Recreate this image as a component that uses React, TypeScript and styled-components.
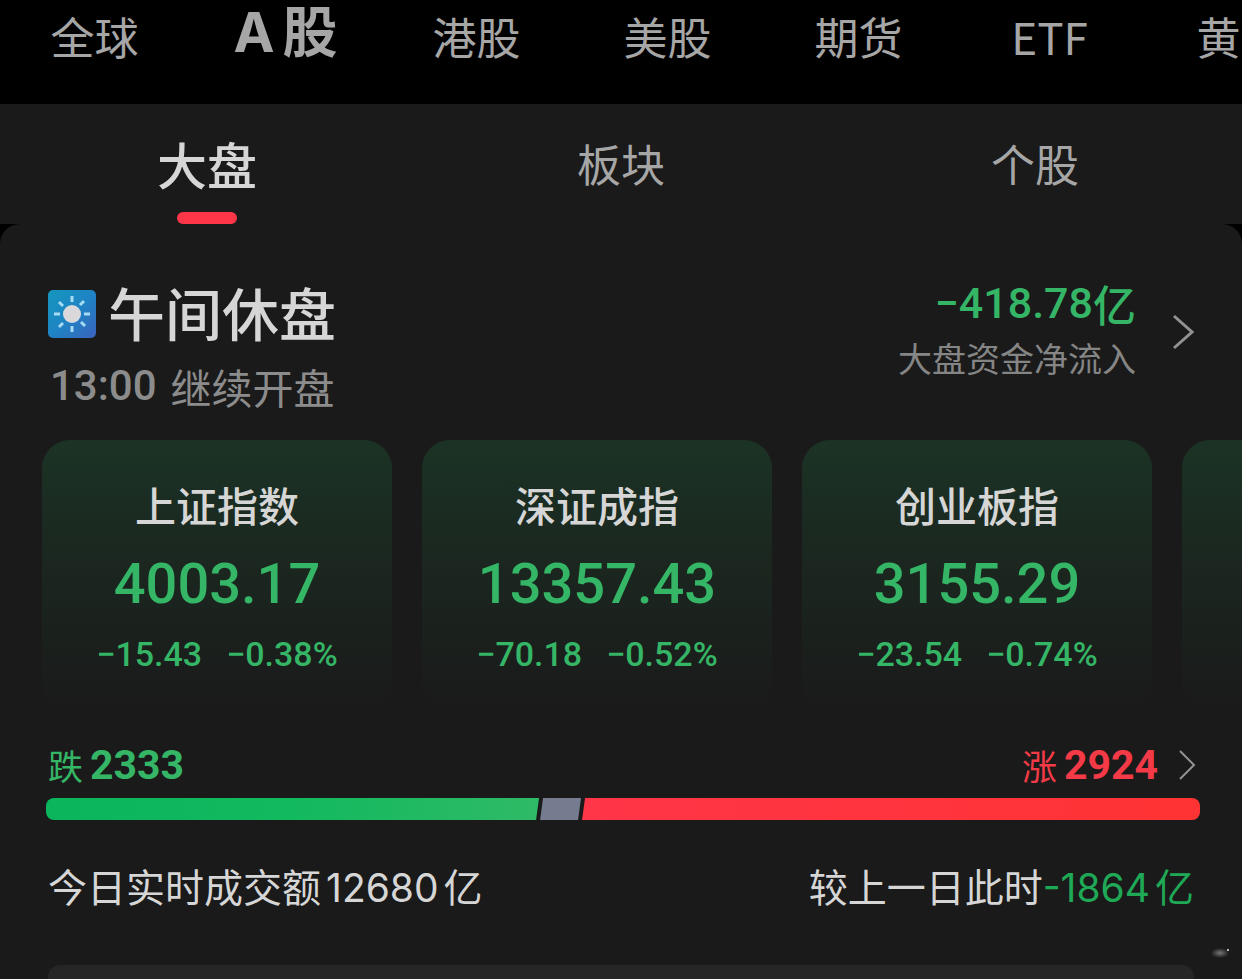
import React from 'react';
import styled, { createGlobalStyle, css } from 'styled-components';

const cjk = '"Noto Sans CJK SC", sans-serif';
const numeric = 'Roboto, "Noto Sans CJK SC", sans-serif';
const green = '#35b566';
const red = '#f43a47';

const GlobalStyle = createGlobalStyle`
  * { box-sizing: border-box; }
  html, body { margin: 0; background: #000; }
  body { font-family: ${cjk}; color: #d6d6d6; overflow-x: hidden; }
  button { margin: 0; padding: 0; border: 0; background: none; color: inherit; font: inherit; cursor: pointer; }
  h1, h2, p { margin: 0; font-weight: 400; }
`;

const Page = styled.div`
  display: flex;
  flex-direction: column;
  min-height: 100vh;
  overflow: hidden;
`;

const MarketNav = styled.nav`
  display: flex;
  height: 104px;
  margin-left: -1px;
  background: #000;
`;

const MarketButton = styled.button<{ $active?: boolean }>`
  && {
    flex: 0 0 191px;
    height: 72px;
    color: #a6a6a6;
    font-size: 44px;
    line-height: 72px;
    white-space: nowrap;
    ${(p) => p.$active && css`
      height: 56px;
      line-height: 56px;
      font-size: 55px;
      font-weight: 700;
    `}
  }
`;

const LatinLead = styled.span`
  margin-right: 8px;
  font-family: Inter, ${cjk};
`;

const ViewTabs = styled.div`
  display: grid;
  grid-template-columns: repeat(3, 1fr);
  height: 120px;
  background: #1a1a1a;
`;

const ViewTab = styled.button<{ $active?: boolean }>`
  && {
    display: flex;
    flex-direction: column;
    align-items: center;
    justify-content: space-between;
    color: ${(p) => (p.$active ? '#d6d6d6' : '#a6a6a6')};
    font-size: ${(p) => (p.$active ? 50 : 44)}px;
    font-weight: ${(p) => (p.$active ? 500 : 400)};
    line-height: 118px;
  }
`;

const TabLabel = styled.span`
  height: 108px;
`;

const TabMarker = styled.span`
  width: 60px;
  height: 12px;
  border-radius: 6px;
  background: #ff3648;
`;

const Panel = styled.main`
  position: relative;
  display: flex;
  flex: 1;
  flex-direction: column;
  border-radius: 20px 20px 0 0;
  background: #1a1a1a;
`;

const Summary = styled.section`
  display: flex;
  align-items: flex-start;
  justify-content: space-between;
  height: 216px;
  padding: 52px 48px 0;
`;

const TitleRow = styled.div`
  display: flex;
  align-items: center;
  gap: 12px;
  height: 76px;
`;

const Title = styled.h1`
  && {
    padding-bottom: 6px;
    font-size: 57px;
    font-weight: 500;
    line-height: 70px;
  }
`;

const Reopen = styled.p`
  display: flex;
  gap: 14px;
  padding-left: 2px;
  color: #8c8c8c;
  font-size: 41px;
  line-height: 68px;
`;

const ReopenTime = styled.time`
  font-family: ${numeric};
  font-size: 42px;
  font-weight: 500;
`;

const FlowButton = styled.button`
  && {
    display: flex;
    align-items: center;
    gap: 36px;
    text-align: right;
  }
`;

const FlowText = styled.div`
  padding-bottom: 2px;
`;

const FlowAmount = styled.p`
  && {
    display: flex;
    align-items: center;
    justify-content: flex-end;
    color: ${green};
    font-size: 43px;
    font-weight: 500;
    line-height: 54px;
  }
`;

const FlowNumber = styled.span`
  font-family: ${numeric};
`;

const FlowLabel = styled.p`
  color: #858585;
  font-size: 34px;
  line-height: 56px;
`;

const IndexList = styled.section`
  display: flex;
  gap: 30px;
  padding-left: 42px;
  overflow: hidden;
`;

const IndexCard = styled.article`
  flex: 0 0 350px;
  height: 270px;
  padding-top: 34px;
  border-radius: 28px;
  background: linear-gradient(#1b3325, #1b2820 40%, #1a1a1a);
  text-align: center;
  white-space: nowrap;
`;

const IndexName = styled.h2`
  && {
    font-size: 41px;
    font-weight: 500;
    line-height: 60px;
  }
`;

const IndexValue = styled.p`
  && {
    color: ${green};
    font-family: ${numeric};
    font-size: 56px;
    font-weight: 500;
    line-height: 100px;
  }
`;

const IndexChange = styled.p`
  && {
    display: flex;
    justify-content: center;
    gap: 24px;
    color: ${green};
    font-family: ${numeric};
    font-size: 34px;
    font-weight: 500;
    line-height: 40px;
  }
`;

const Breadth = styled.section`
  padding: 28px 42px 0 46px;
`;

const BreadthCounts = styled.div`
  display: flex;
  align-items: flex-start;
  justify-content: space-between;
  height: 60px;
  line-height: 54px;
`;

const Count = styled.div<{ $up?: boolean }>`
  display: flex;
  align-items: center;
  gap: 7px;
  padding-left: 2px;
  color: ${(p) => (p.$up ? red : green)};
  font-size: 35px;
`;

const CountValue = styled.strong`
  font-family: ${numeric};
  font-size: 41px;
  font-weight: 700;
`;

const MoreButton = styled.button`
  && {
    display: flex;
    align-items: center;
    height: 54px;
    margin: 0 4px 0 20px;
  }
`;

const CountGroup = styled.div`
  display: flex;
`;

const Bar = styled.div`
  display: flex;
  gap: 1px;
  height: 22px;
  border-radius: 8px;
  overflow: hidden;
`;

const Fall = styled.div`
  flex: 2333 0 0;
  background: linear-gradient(90deg, #0ab55c, #12b95f 50%, #2fba66);
  clip-path: polygon(0 0, 100% 0, calc(100% - 3px) 100%, 0 100%);
`;

const Flat = styled.div`
  flex: 194 0 0;
  background: #757c8f;
  clip-path: polygon(3px 0, 100% 0, calc(100% - 3px) 100%, 0 100%);
`;

const Rise = styled.div`
  flex: 2924 0 0;
  background: linear-gradient(90deg, #ff3548, #ff3333);
  clip-path: polygon(3px 0, 100% 0, 100% 100%, 0 100%);
`;

const Turnover = styled.section`
  display: flex;
  justify-content: space-between;
  padding: 36px 48px 0;
  font-family: Inter, ${cjk};
  font-size: 39px;
  line-height: 64px;
  white-space: nowrap;
`;

const TurnoverText = styled.p`
  display: flex;
  gap: 5px;
`;

const Comparison = styled.p`
  display: flex;
`;

const Drop = styled.span`
  display: flex;
  gap: 5px;
  color: #1fa956;
`;

const NextCard = styled.section`
  flex: 1;
  min-height: 14px;
  margin: 45px 48px 0;
  border-radius: 12px 12px 0 0;
  background: #262626;
`;

const Glint = styled.svg`
  position: absolute;
  right: 10px;
  bottom: 18px;
`;

const SunIcon = () => (
  <svg width="48" height="48" viewBox="0 0 48 48" aria-hidden="true">
    <defs>
      <linearGradient id="sky" x1="0" y1="0" x2="1" y2="1">
        <stop offset="0" stopColor="#1597bd" />
        <stop offset="0.5" stopColor="#1e84c4" />
        <stop offset="1" stopColor="#3a63bd" />
      </linearGradient>
    </defs>
    <rect width="48" height="48" rx="5" fill="url(#sky)" />
    <g stroke="#a5dcf3" strokeWidth="3">
      <path d="M24 6v6M24 36v6M6 24h6M36 24h6M11 12l4 4M33 32l4 4M36 11l-4 4M15 33l-4 4" />
    </g>
    <circle cx="24" cy="24" r="9" fill="#d9d9dc" />
  </svg>
);

const Chevron = ({ width, height, strokeWidth }: { width: number; height: number; strokeWidth: number }) => (
  <svg width={width} height={height} fill="none" stroke="#929292" strokeWidth={strokeWidth} aria-hidden="true">
    <path d={`M2 2L${width - 2} ${height / 2}L2 ${height - 2}`} />
  </svg>
);

const markets = ['全球', 'A股', '港股', '美股', '期货', 'ETF', '黄金'];
const views = ['大盘', '板块', '个股'];
const indices = [
  { name: '上证指数', value: '4003.17', change: '−15.43', percent: '−0.38%' },
  { name: '深证成指', value: '13357.43', change: '−70.18', percent: '−0.52%' },
  { name: '创业板指', value: '3155.29', change: '−23.54', percent: '−0.74%' },
];

export default function App() {
  return (
    <Page>
      <GlobalStyle />
      <MarketNav>
        {markets.map((m) => (
          <MarketButton key={m} $active={m === 'A股'}>
            {m === 'A股' ? <><LatinLead>A</LatinLead>股</> : m}
          </MarketButton>
        ))}
      </MarketNav>
      <ViewTabs>
        {views.map((v, i) => (
          <ViewTab key={v} $active={i === 0}>
            <TabLabel>{v}</TabLabel>
            {i === 0 && <TabMarker />}
          </ViewTab>
        ))}
      </ViewTabs>
      <Panel>
        <Summary>
          <div>
            <TitleRow>
              <SunIcon />
              <Title>午间休盘</Title>
            </TitleRow>
            <Reopen>
              <ReopenTime>13:00</ReopenTime>
              <span>继续开盘</span>
            </Reopen>
          </div>
          <FlowButton>
            <FlowText>
              <FlowAmount><FlowNumber>−418.78</FlowNumber>亿</FlowAmount>
              <FlowLabel>大盘资金净流入</FlowLabel>
            </FlowText>
            <Chevron width={22} height={36} strokeWidth={3} />
          </FlowButton>
        </Summary>
        <IndexList>
          {indices.map((x) => (
            <IndexCard key={x.name}>
              <IndexName>{x.name}</IndexName>
              <IndexValue>{x.value}</IndexValue>
              <IndexChange>
                <span>{x.change}</span>
                <span>{x.percent}</span>
              </IndexChange>
            </IndexCard>
          ))}
          <IndexCard />
        </IndexList>
        <Breadth>
          <BreadthCounts>
            <Count>跌<CountValue>2333</CountValue></Count>
            <CountGroup>
              <Count $up>涨<CountValue>2924</CountValue></Count>
              <MoreButton aria-label="涨跌分布">
                <Chevron width={18} height={32} strokeWidth={2} />
              </MoreButton>
            </CountGroup>
          </BreadthCounts>
          <Bar>
            <Fall />
            <Flat />
            <Rise />
          </Bar>
        </Breadth>
        <Turnover>
          <TurnoverText>
            <span>今日实时成交额</span>
            <span>12680</span>
            <span>亿</span>
          </TurnoverText>
          <Comparison>
            <span>较上一日此时</span>
            <Drop><span>-1864</span><span>亿</span></Drop>
          </Comparison>
        </Turnover>
        <NextCard />
        <Glint width="22" height="16" aria-hidden="true">
          <defs>
            <radialGradient id="glow">
              <stop offset="0" stopColor="#777" />
              <stop offset="1" stopColor="#777" stopOpacity="0" />
            </radialGradient>
          </defs>
          <ellipse cx="10" cy="8" rx="9" ry="5" fill="url(#glow)" />
          <circle cx="18" cy="5" r="1" fill="#eee" />
        </Glint>
      </Panel>
    </Page>
  );
}
